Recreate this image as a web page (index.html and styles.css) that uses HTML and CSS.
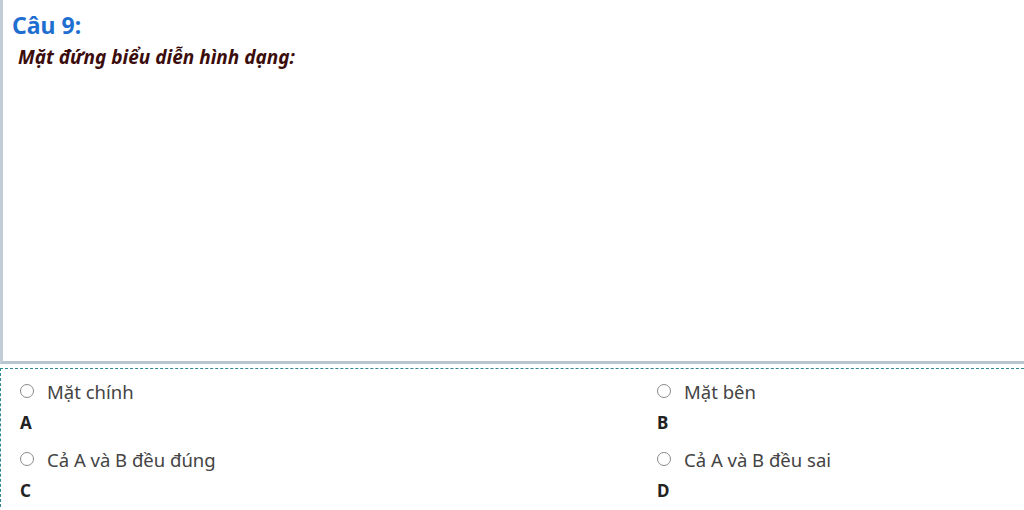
FILE: index.html
```html
<!DOCTYPE html>
<html lang="vi">
<head>
<meta charset="utf-8">
<link rel="stylesheet" href="styles.css">
</head>
<body>
<div class="question">
  <h2 class="title">Câu 9:</h2>
  <p class="prompt">Mặt đứng biểu diễn hình dạng:</p>
</div>
<div class="answers">
  <div class="option">
    <label class="choice"><span class="radio"></span><span class="text">Mặt chính</span></label>
    <div class="letter">A</div>
  </div>
  <div class="option">
    <label class="choice"><span class="radio"></span><span class="text">Mặt bên</span></label>
    <div class="letter">B</div>
  </div>
  <div class="option">
    <label class="choice"><span class="radio"></span><span class="text">Cả A và B đều đúng</span></label>
    <div class="letter">C</div>
  </div>
  <div class="option">
    <label class="choice"><span class="radio"></span><span class="text">Cả A và B đều sai</span></label>
    <div class="letter">D</div>
  </div>
</div>
</body>
</html>
```
FILE: styles.css
```css
html, body {
  margin: 0;
  padding: 0;
  background: #fff;
  font-family: "Noto Sans", "Open Sans", sans-serif;
}
.question {
  height: 364px;
  box-sizing: border-box;
  border-left: 3px solid #c3cdd8;
  border-bottom: 3px solid #b9c6d0;
  padding: 9px 0 0 9px;
}
.title {
  margin: 0;
  font-size: 23px;
  font-weight: bold;
  color: #1f6fd1;
  line-height: 32px;
}
.prompt {
  margin: 0 0 0 6px;
  font-size: 19px;
  font-weight: bold;
  font-style: italic;
  color: #3b0d0d;
  line-height: 32px;
}
.answers {
  margin-top: 4px;
  border: 1px dashed #2f8790;
  border-right: none;
  border-bottom: none;
  display: grid;
  grid-template-columns: 637px 1fr;
  padding: 8px 0 0 19px;
  row-gap: 6px;
}
.choice {
  display: flex;
  align-items: center;
  gap: 13px;
  height: 28px;
}
.radio {
  width: 12px;
  height: 12px;
  border: 1px solid #8a8a8a;
  border-radius: 50%;
}
.text {
  font-size: 18.5px;
  color: #444;
}
.letter {
  padding-top: 2px;
  font-size: 17px;
  font-weight: bold;
  color: #222;
  line-height: 32px;
}
```
